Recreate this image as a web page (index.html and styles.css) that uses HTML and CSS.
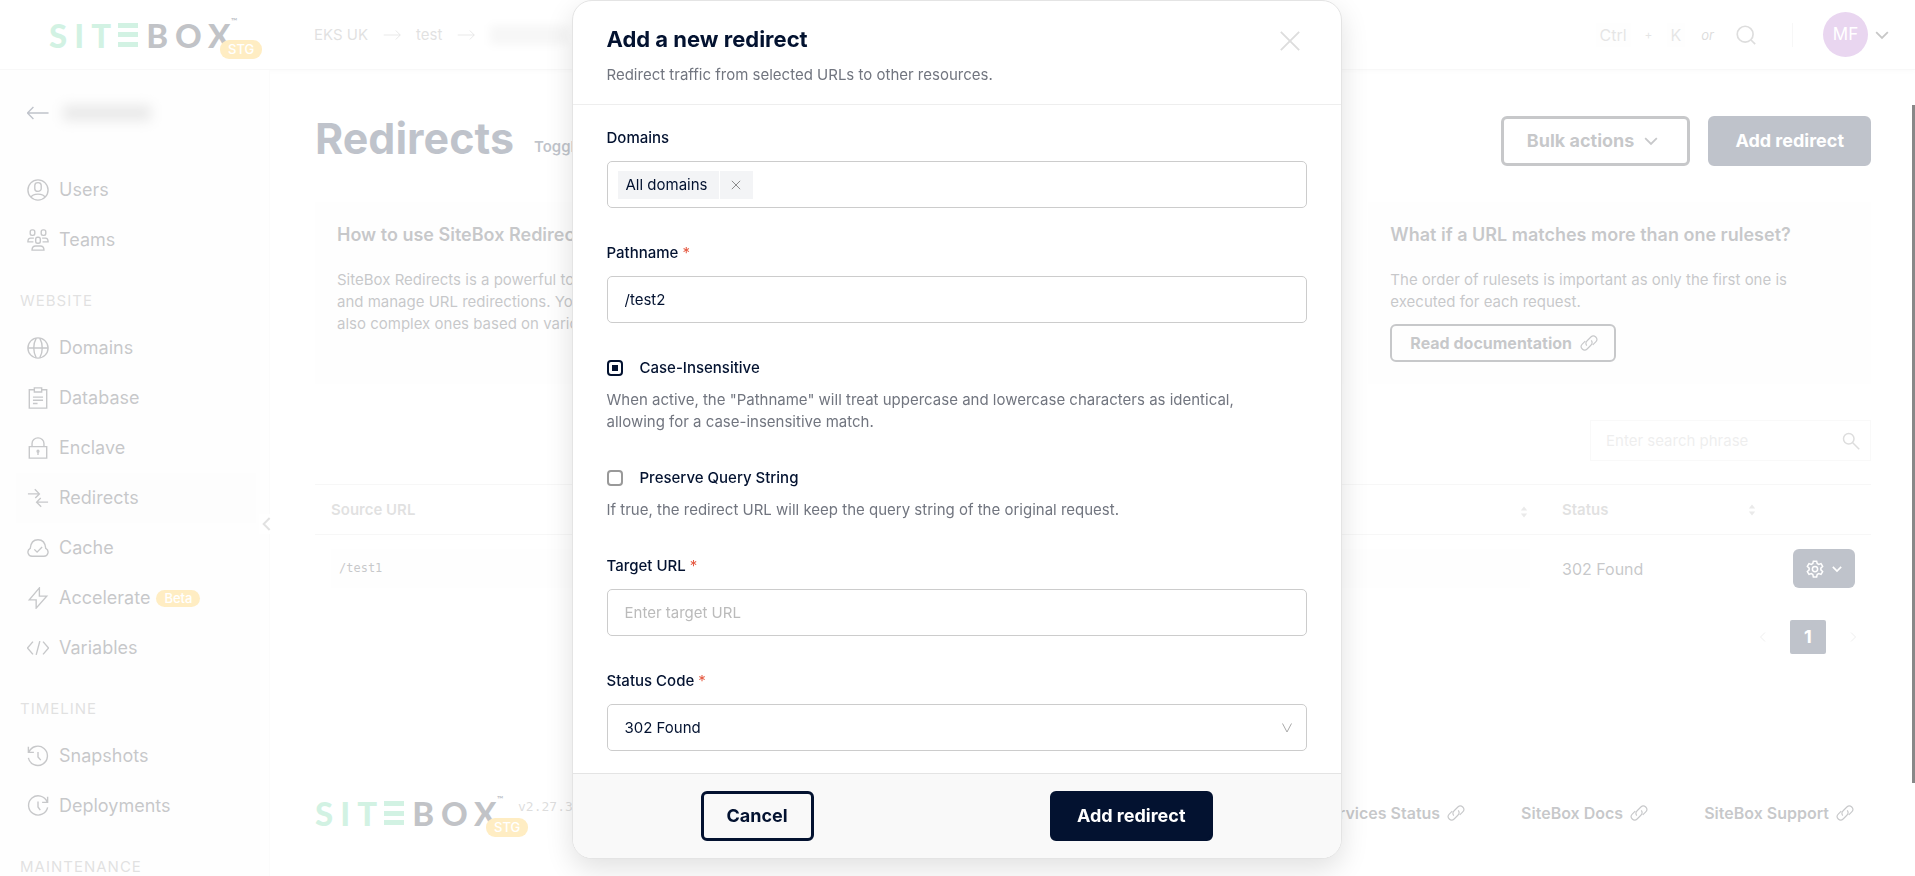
FILE: index.html
```html
<!DOCTYPE html>
<html lang="en">
<head>
<meta charset="utf-8">
<meta name="viewport" content="width=device-width, initial-scale=1">
<title>Redirects - SiteBox</title>
<link rel="stylesheet" href="styles.css">
</head>
<body>

<!-- shared icons -->
<svg class="sprite" aria-hidden="true">
    <symbol id="i-link" viewBox="0 0 24 24"><path d="M9 15.500a5 5 0 0 1 .5-6.500l5-5a4.500 4.500 0 0 1 6.500 6.500l-4 4M15 8.500a5 5 0 0 1-.5 6.500l-5 5A4.500 4.500 0 0 1 3 13.500l4-4"/></symbol>
    <symbol id="i-down" viewBox="0 0 24 24"><path d="M2 7l10 10L22 7"/></symbol>
    <symbol id="i-vee" viewBox="0 0 24 24"><path d="M3 3l9 17 9-17"/></symbol>
    <symbol id="i-left" viewBox="0 0 24 24"><path d="M16 3l-9 9 9 9"/></symbol>
    <symbol id="i-right" viewBox="0 0 24 24"><path d="M8 3l9 9-9 9"/></symbol>
    <symbol id="i-arrow" viewBox="0 0 24 24"><path d="M1 12h22M17 6l6 6-6 6"/></symbol>
    <symbol id="i-search" viewBox="0 0 24 24"><circle cx="11" cy="11" r="9.500"/><path d="M18 18l5 5"/></symbol>
    <symbol id="i-find" viewBox="0 0 24 24"><circle cx="9" cy="9" r="7"/><path d="M14 14l9 9"/></symbol>
    <symbol id="i-close" viewBox="0 0 24 24"><path d="M2 2l20 20M22 2L2 22"/></symbol>
    <symbol id="i-sort" viewBox="0 0 10 16"><path class="fill" d="M1 6l4-5 4 5zM1 10l4 5 4-5z"/></symbol>
</svg>

<div class="app">
    <header class="topbar">
        <a class="logo" href="#" aria-label="SiteBox">
            <span class="logo-site">SIT</span><span class="logo-bars"><i></i><i></i><i></i></span><span class="logo-box">BOX</span><span class="logo-tm">™</span>
            <span class="badge badge-stg">STG</span>
        </a>
        <nav class="crumbs" aria-label="Breadcrumb">
            <a href="#">EKS UK</a>
            <svg class="icon"><use href="#i-arrow"/></svg>
            <a href="#">test</a>
            <svg class="icon"><use href="#i-arrow"/></svg>
            <span class="crumb-hidden"></span>
        </nav>
        <div class="tools">
            <kbd>Ctrl</kbd><span class="plus">+</span><kbd>K</kbd><em>or</em>
            <button class="icon-btn" type="button" aria-label="Search"><svg class="icon"><use href="#i-search"/></svg></button>
            <span class="divider"></span>
            <button class="user" type="button"><span class="avatar">MF</span><svg class="icon"><use href="#i-down"/></svg></button>
        </div>
    </header>

    <div class="columns">
        <aside class="sidebar">
            <a class="back" href="#" aria-label="Back">
                <svg class="icon" viewBox="0 0 24 24"><path d="M23.500 12H.5M7 5.500L.5 12 7 18.500"/></svg>
                <span class="site-hidden"></span>
            </a>
            <nav>
                <a href="#"><svg class="icon" viewBox="0 0 24 24"><circle cx="12" cy="12" r="11"/><path d="M8.500 7a3.500 3 0 0 1 7 0v3.500a3.500 3 0 0 1-7 0zM4.500 20c1-3 4-3.500 7.500-3.500s6.500.5 7.500 3.500"/></svg>Users</a>
                <a href="#"><svg class="icon" viewBox="0 0 24 24"><rect x="3.500" y="1" width="5" height="6" rx="2"/><rect x="15.500" y="1" width="5" height="6" rx="2"/><rect x="9.500" y="9" width="5" height="6.500" rx="2"/><path d="M7.500 10H4c-2 0-3 1.500-3 4h6M16.500 10H20c2 0 3 1.500 3 4h-6M5.500 23c0-3 1.500-4.500 4-4.500h5c2.500 0 4 1.500 4 4.500z"/></svg>Teams</a>
                <h2>WEBSITE</h2>
                <a href="#"><svg class="icon" viewBox="0 0 24 24"><circle cx="12" cy="12" r="11"/><path d="M1 12h22M10 1.500c-3.500 6-3.500 15 0 21M14 1.500c3.500 6 3.500 15 0 21"/></svg>Domains</a>
                <a href="#"><svg class="icon" viewBox="0 0 24 24"><path d="M8 3H2.500v20h19V3H16M8 1h8v4.500H8zM6.500 11h11M6.500 14.500h11M6.500 18h5"/></svg>Database</a>
                <a href="#"><svg class="icon" viewBox="0 0 24 24"><path d="M2.500 10.500h19V23h-19zM5.500 10.500V7a6.500 6 0 0 1 13 0v3.500M12 16v3.500"/><circle cx="12" cy="15.500" r="1"/></svg>Enclave</a>
                <a class="current" href="#"><svg class="icon" viewBox="0 0 24 24"><path d="M1 7.500h12M8.500 2.500l5 5-4.500 4.500M23 16.500H11M15.500 21.500l-5-5 4.500-4.500"/></svg>Redirects</a>
                <a href="#"><svg class="icon" viewBox="0 0 24 24"><path d="M5.500 21a4.500 4.500 0 0 1-2-8.500C4 7 7 3 12 3s8 4 8.500 9.500a4.500 4.500 0 0 1-2 8.500zM8 13.500l3 3 5.500-5.500"/></svg>Cache</a>
                <a href="#"><svg class="icon" viewBox="0 0 24 24"><path d="M13.500 1L2.500 14H10v9L21.500 10H13.500z"/></svg>Accelerate<span class="badge">Beta</span></a>
                <a href="#"><svg class="icon" viewBox="0 0 24 24"><path d="M6.500 5L.5 12l6 7M17.500 5l6 7-6 7M14 4.500L10 19.500"/></svg>Variables</a>
                <h2>TIMELINE</h2>
                <a href="#"><svg class="icon" viewBox="0 0 24 24"><path d="M1.500 2v6h6M2 8a10.500 10.500 0 1 1-.5 6M12 7.500v5.500l3 3.500"/></svg>Snapshots</a>
                <a href="#"><svg class="icon" viewBox="0 0 24 24"><path d="M22.500 2v6h-6M22 7.500a10.500 10.500 0 1 0 .5 6M12 7v6l2.500 3.500"/></svg>Deployments</a>
                <h2>MAINTENANCE</h2>
            </nav>
            <button class="collapse" type="button" aria-label="Collapse sidebar"><svg class="icon"><use href="#i-left"/></svg></button>
        </aside>

        <main class="content">
            <div class="title-row">
                <h1>Redirects</h1>
                <a class="toggle" href="#">Toggle info</a>
                <button class="btn btn-outline" type="button">Bulk actions <svg class="icon"><use href="#i-down"/></svg></button>
                <button class="btn btn-solid" type="button">Add redirect</button>
            </div>

            <div class="cards">
                <section class="card">
                    <h3>How to use SiteBox Redirects?</h3>
                    <p>SiteBox Redirects is a powerful tool to create<br>and manage URL redirections. You can set up<br>also complex ones based on various rules.</p>
                </section>
                <section class="card"></section>
                <section class="card">
                    <h3>What if a URL matches more than one ruleset?</h3>
                    <p>The order of rulesets is important as only the first one is executed for each request.</p>
                    <a class="doc-link" href="#">Read documentation <svg class="icon"><use href="#i-link"/></svg></a>
                </section>
            </div>

            <label class="search">
                <input type="search" placeholder="Enter search phrase" aria-label="Search redirects">
                <svg class="icon"><use href="#i-find"/></svg>
            </label>

            <table class="rules">
                <colgroup><col class="col-source"><col class="col-target"><col class="col-status"><col></colgroup>
                <thead>
                    <tr>
                        <th>Source URL</th>
                        <th><svg class="sort"><use href="#i-sort"/></svg></th>
                        <th>Status <svg class="sort"><use href="#i-sort"/></svg></th>
                        <th></th>
                    </tr>
                </thead>
                <tbody>
                    <tr>
                        <td><code>/test1</code></td>
                        <td><code>&nbsp;</code></td>
                        <td>302 Found</td>
                        <td>
                            <button class="gear" type="button" aria-label="Rule options">
                                <svg class="icon" viewBox="0 0 24 24"><path d="M9.800 1.500h4.400l.7 3.200 2 1.100 3.100-1 2.200 3.800-2.400 2.200v2.400l2.400 2.200-2.200 3.800-3.100-1-2 1.100-.7 3.200H9.800l-.7-3.200-2-1.100-3.100 1-2.200-3.800 2.400-2.200v-2.400L1.800 8.600 4 4.800l3.100 1 2-1.100z"/><circle cx="12" cy="12" r="3.500"/></svg>
                                <svg class="icon small"><use href="#i-down"/></svg>
                            </button>
                        </td>
                    </tr>
                </tbody>
            </table>

            <div class="pager">
                <button type="button" aria-label="Previous page"><svg class="icon"><use href="#i-left"/></svg></button>
                <button class="page-on" type="button">1</button>
                <button type="button" aria-label="Next page"><svg class="icon"><use href="#i-right"/></svg></button>
            </div>

            <footer class="foot">
                <a class="logo" href="#" aria-label="SiteBox">
                    <span class="logo-site">SIT</span><span class="logo-bars"><i></i><i></i><i></i></span><span class="logo-box">BOX</span><span class="logo-tm">™</span>
                    <span class="badge badge-stg">STG</span>
                </a>
                <span class="version">v2.27.3</span>
                <nav>
                    <a href="#">Services Status <svg class="icon"><use href="#i-link"/></svg></a>
                    <a href="#">SiteBox Docs <svg class="icon"><use href="#i-link"/></svg></a>
                    <a href="#">SiteBox Support <svg class="icon"><use href="#i-link"/></svg></a>
                </nav>
            </footer>
        </main>
    </div>
</div>

<div class="overlay">
    <form class="modal" role="dialog" aria-labelledby="modal-title" action="#" onsubmit="return false">
        <div class="modal-head">
            <div>
                <h2 id="modal-title">Add a new redirect</h2>
                <p>Redirect traffic from selected URLs to other resources.</p>
            </div>
            <button class="close" type="button" aria-label="Close"><svg class="icon"><use href="#i-close"/></svg></button>
        </div>

        <div class="modal-body">
            <div class="field">
                <label for="domains">Domains</label>
                <div class="control tags">
                    <span class="tag">All domains<button type="button" aria-label="Remove All domains"><svg class="icon"><use href="#i-close"/></svg></button></span>
                    <input id="domains" type="text">
                </div>
            </div>
            <div class="field">
                <label for="pathname">Pathname <span class="req">*</span></label>
                <input class="control" id="pathname" type="text" value="/test2">
            </div>
            <div class="check">
                <label><input type="checkbox" checked> Case-Insensitive</label>
                <p>When active, the "Pathname" will treat uppercase and lowercase characters as identical, allowing for a case-insensitive match.</p>
            </div>
            <div class="check">
                <label><input type="checkbox"> Preserve Query String</label>
                <p>If true, the redirect URL will keep the query string of the original request.</p>
            </div>
            <div class="field">
                <label for="target">Target URL <span class="req">*</span></label>
                <input class="control" id="target" type="text" placeholder="Enter target URL">
            </div>
            <div class="field">
                <label for="status">Status Code <span class="req">*</span></label>
                <div class="select">
                    <select class="control" id="status">
                        <option>301 Moved Permanently</option>
                        <option selected>302 Found</option>
                    </select>
                    <svg class="icon"><use href="#i-vee"/></svg>
                </div>
            </div>
        </div>

        <div class="modal-foot">
            <button class="btn btn-outline" type="button">Cancel</button>
            <button class="btn btn-solid" type="submit">Add redirect</button>
        </div>
    </form>
</div>
<div class="scroll-thumb"></div>

</body>
</html>
```

FILE: styles.css
```css
* { box-sizing: border-box; }

html, body { height: 100%; overflow: hidden; }

body {
    margin: 0;
    font-family: Inter, "Liberation Sans", sans-serif;
    font-size: 15px;
    line-height: 22px;
    color: #031230;
    background: #fff;
}

h1, h2, h3, p { margin: 0; }
a { color: inherit; text-decoration: none; }
button, input, select { font: inherit; color: inherit; }
button { padding: 0; border: 0; background: none; }

.sprite { position: absolute; width: 0; height: 0; }
.fill { fill: currentColor; stroke: none; }
.icon {
    flex: none;
    width: 18px;
    height: 18px;
    fill: none;
    stroke: currentColor;
    stroke-width: 2;
}

.app {
    display: flex;
    flex-direction: column;
    height: 100vh;
}

/* top bar */
.topbar {
    display: flex;
    align-items: center;
    flex: none;
    height: 70px;
    padding: 0 26px 0 49px;
    border-bottom: 1px solid #e4e4e4;
    box-shadow: 0 2px 4px rgba(0, 0, 0, .06);
    font-size: 16px;
}

.logo {
    position: relative;
    display: flex;
    align-items: center;
    height: 24px;
    width: 190px;
    font: 900 33px/24px Lato, sans-serif;
    letter-spacing: 7px;
}
.logo-site { color: #4ecb8f; }
.logo-bars {
    display: flex;
    flex: none;
    flex-direction: column;
    justify-content: space-between;
    width: 20px;
    height: 24px;
    margin-right: 8px;
}
.logo-bars i { height: 5px; background: #4ecb8f; }
.logo-box { color: #0b1020; }
.logo-tm {
    align-self: flex-start;
    margin: -6px 0 0 -6px;
    font-size: 8px;
    line-height: 8px;
    letter-spacing: 0;
}
.badge {
    margin-left: 6px;
    padding: 0 8px;
    border-radius: 9px;
    background: #fdb813;
    color: #fff;
    font: 500 13px/17px Inter, sans-serif;
    letter-spacing: 0;
}
.badge-stg {
    position: absolute;
    left: 171px;
    top: 17px;
    margin: 0;
    line-height: 19px;
}

.crumbs {
    display: flex;
    align-items: center;
    gap: 15px;
    margin-left: 75px;
    font-size: 15px;
    color: #888;
}
.crumbs .icon { stroke-width: 1; }
.crumb-hidden { width: 78px; height: 20px; background: #ddd; filter: blur(4px); }

.tools {
    display: flex;
    align-items: center;
    margin-left: auto;
    color: #777;
}
kbd {
    padding: 0 4px;
    background: #fafafa;
    color: #999;
    font: 16px/24px Inter, sans-serif;
}
.plus { margin: 0 14px; color: #999; font-size: 12px; }
.tools em { margin: 0 22px 0 16px; font-size: 13px; }
.icon-btn { display: flex; }
.icon-btn .icon { width: 20px; height: 20px; }
.divider { width: 1px; height: 24px; margin: 0 30px 0 36px; background: #ddd; }
.user { display: flex; align-items: center; gap: 7px; color: #222; }
.user .icon { width: 14px; height: 14px; stroke-width: 3; }
.avatar {
    width: 45px;
    height: 45px;
    border-radius: 50%;
    background: #a75bc4;
    color: #fff;
    font-size: 17px;
    line-height: 45px;
}

/* sidebar */
.columns { display: flex; flex: 1; min-height: 0; }
.sidebar {
    position: relative;
    flex: none;
    width: 270px;
    padding: 18px 13px 0 16px;
    border-right: 1px solid #eee;
    background: #fafafa;
}
.back { display: flex; align-items: center; height: 50px; margin-bottom: 27px; padding-left: 11px; }
.site-hidden { width: 88px; height: 16px; margin-left: 14px; background: #aaa; filter: blur(6px); }
.sidebar .icon { width: 22px; height: 22px; stroke-width: 1.500; }
.sidebar nav { color: #20242c; font-size: 18px; }
.sidebar nav a {
    display: flex;
    align-items: center;
    height: 50px;
    padding-left: 11px;
}
.sidebar nav a > .icon { margin-right: 10px; }
.sidebar nav .current { background: #f7f7f8; }
.sidebar h2 {
    padding: 26px 4px 12px;
    color: #888;
    font-size: 15px;
    font-weight: 400;
    line-height: 20px;
    letter-spacing: 1px;
}
.collapse {
    position: absolute;
    right: -6px;
    top: 444px;
    display: flex;
    padding: 2px 0;
    background: #fff;
    color: #888;
}
.collapse .icon { width: 16px; height: 16px; stroke-width: 3; }

/* main column */
.content {
    display: flex;
    flex-direction: column;
    flex: 1;
    min-width: 0;
    padding: 46px 44px 0 45px;
}
.title-row { display: flex; align-items: flex-start; height: 50px; }
h1 { font-size: 43px; line-height: 44px; }
.toggle { margin: 20px auto 0 20px; font-weight: 600; white-space: nowrap; }

.btn {
    display: flex;
    align-items: center;
    gap: 10px;
    height: 50px;
    padding: 0 23px;
    border: 3px solid #031230;
    border-radius: 6px;
    font-size: 18px;
    font-weight: 700;
    white-space: nowrap;
}
.btn .icon { width: 14px; height: 14px; stroke-width: 3; }
.btn-solid { padding: 0 24px; background: #031230; color: #fff; }
.title-row .btn-outline { margin-right: 18px; border-color: #20242c; color: #20242c; padding-right: 29px; }

.cards {
    display: grid;
    grid-template-columns: repeat(3, 1fr);
    gap: 24px;
    margin-top: 36px;
}
.card {
    min-height: 182px;
    padding: 22px;
    background: #fafafa;
    color: #20242c;
}
.card h3 { margin-bottom: 23px; font-size: 18px; font-weight: 600; white-space: nowrap; }
.doc-link {
    display: inline-flex;
    align-items: center;
    gap: 8px;
    height: 38px;
    margin-top: 11px;
    padding: 0 16px 0 18px;
    border: 2px solid #20242c;
    border-radius: 6px;
    font-size: 16px;
    font-weight: 700;
}

.search {
    display: flex;
    align-items: center;
    align-self: flex-end;
    width: 281px;
    height: 41px;
    margin-top: 36px;
    padding: 0 10px 0 13px;
    border: 1px solid #e6e6e6;
    color: #777;
}
.search input { flex: 1; min-width: 0; border: 0; outline: 0; background: none; }
.search input::placeholder { color: #bbb; }

.rules {
    width: 100%;
    margin-top: 23px;
    border-collapse: collapse;
    table-layout: fixed;
    color: #20242c;
}
.col-source { width: 616px; }
.col-target { width: 615px; }
.col-status { width: 228px; }
.rules th {
    height: 50px;
    padding: 0 16px;
    border: solid #ddd;
    border-width: 1px 0;
    color: #888;
    font-weight: 600;
    text-align: left;
}
.sort { float: right; width: 8px; height: 14px; margin: 4px 2px 0 0; color: #aaa; }
.rules td { height: 68px; padding: 0 16px; font-size: 16px; }
.rules code {
    display: block;
    padding: 0 8px;
    background: #f9f9f9;
    font: 12px/39px "DejaVu Sans Mono", monospace;
}
.gear {
    display: flex;
    align-items: center;
    justify-content: center;
    gap: 8px;
    width: 62px;
    height: 39px;
    margin-left: auto;
    border-radius: 6px;
    background: #031230;
    color: #fff;
}
.gear .small { width: 10px; height: 10px; stroke-width: 4; }

.pager { display: flex; justify-content: flex-end; margin-top: 17px; color: #bbb; }
.pager button { display: flex; align-items: center; justify-content: center; width: 36px; height: 34px; }
.pager .icon { width: 12px; height: 12px; }
.pager .page-on { margin: 0 9px; border-radius: 2px; background: #031230; color: #fff; font-size: 18px; font-weight: 700; }

.foot { display: flex; align-items: center; height: 50px; margin: auto 0 38px; }
.version { margin: -12px 0 0 13px; color: #777; font: 13px/20px "DejaVu Sans Mono", monospace; }
.foot nav { display: flex; gap: 56px; margin-left: auto; padding-right: 17px; color: #20242c; font-size: 16px; font-weight: 600; }
.foot nav a { display: flex; align-items: center; gap: 7px; }
.foot .icon, .doc-link .icon { stroke-width: 1.500; }

/* modal */
.overlay {
    position: fixed;
    inset: 0;
    padding: 0 18px 0 16px;
    background: rgba(255, 255, 255, .75);
}
.modal {
    max-width: 770px;
    margin: 0 auto;
    border: 1px solid #e4e4e4;
    border-radius: 20px;
    background: #fff;
    box-shadow: 0 10px 28px rgba(0, 0, 0, .12);
    overflow: hidden;
}
.modal-head {
    display: flex;
    justify-content: space-between;
    padding: 24px 40px 18px 34px;
    border-bottom: 1px solid #eee;
}
.modal-head h2 { margin-bottom: 11px; font-size: 22px; line-height: 28px; }
.modal p { max-width: 660px; color: #71757f; }
.close { display: flex; align-self: flex-start; margin-top: 5px; color: #ddd; }
.close .icon { width: 22px; height: 22px; }

.modal-body { display: grid; gap: 34px; padding: 22px 34px; }
.field > label { display: block; margin-bottom: 12px; font-weight: 500; }
.req { color: #e5573f; font-weight: 400; }
.control {
    display: block;
    width: 100%;
    height: 47px;
    padding: 0 17px;
    border: 1px solid #ccc;
    border-radius: 5px;
    background: #fff;
}
.control::placeholder { color: #bbb; }
.tags { display: flex; align-items: center; padding: 0 10px; }
.tags input { flex: 1; min-width: 0; border: 0; outline: 0; }
.tag { display: flex; padding-left: 8px; background: #f3f4f6; line-height: 28px; }
.tag button {
    display: flex;
    align-items: center;
    justify-content: center;
    width: 34px;
    margin-left: 11px;
    border-left: 1px solid #fff;
    color: #777;
}
.tag .icon { width: 10px; height: 10px; }
.select { position: relative; }
.select select { appearance: none; }
.select .icon {
    position: absolute;
    right: 14px;
    top: 18px;
    width: 12px;
    height: 12px;
    color: #aaa;
    pointer-events: none;
}

.check label { display: flex; align-items: center; gap: 17px; margin-bottom: 10px; font-weight: 500; }
.check input {
    appearance: none;
    width: 16px;
    height: 16px;
    margin: 0;
    border: 2px solid #999;
    border-radius: 4px;
}
.check input:checked {
    border-color: #031230;
    background: linear-gradient(#031230, #031230) center / 6px 6px no-repeat;
}

.modal-foot {
    display: flex;
    justify-content: space-between;
    padding: 17px 128px;
    border-top: 1px solid #e4e4e4;
    background: #f9f9f9;
}

.scroll-thumb {
    position: fixed;
    right: 0;
    top: 105px;
    bottom: 93px;
    width: 3px;
    background: #888;
}
```
